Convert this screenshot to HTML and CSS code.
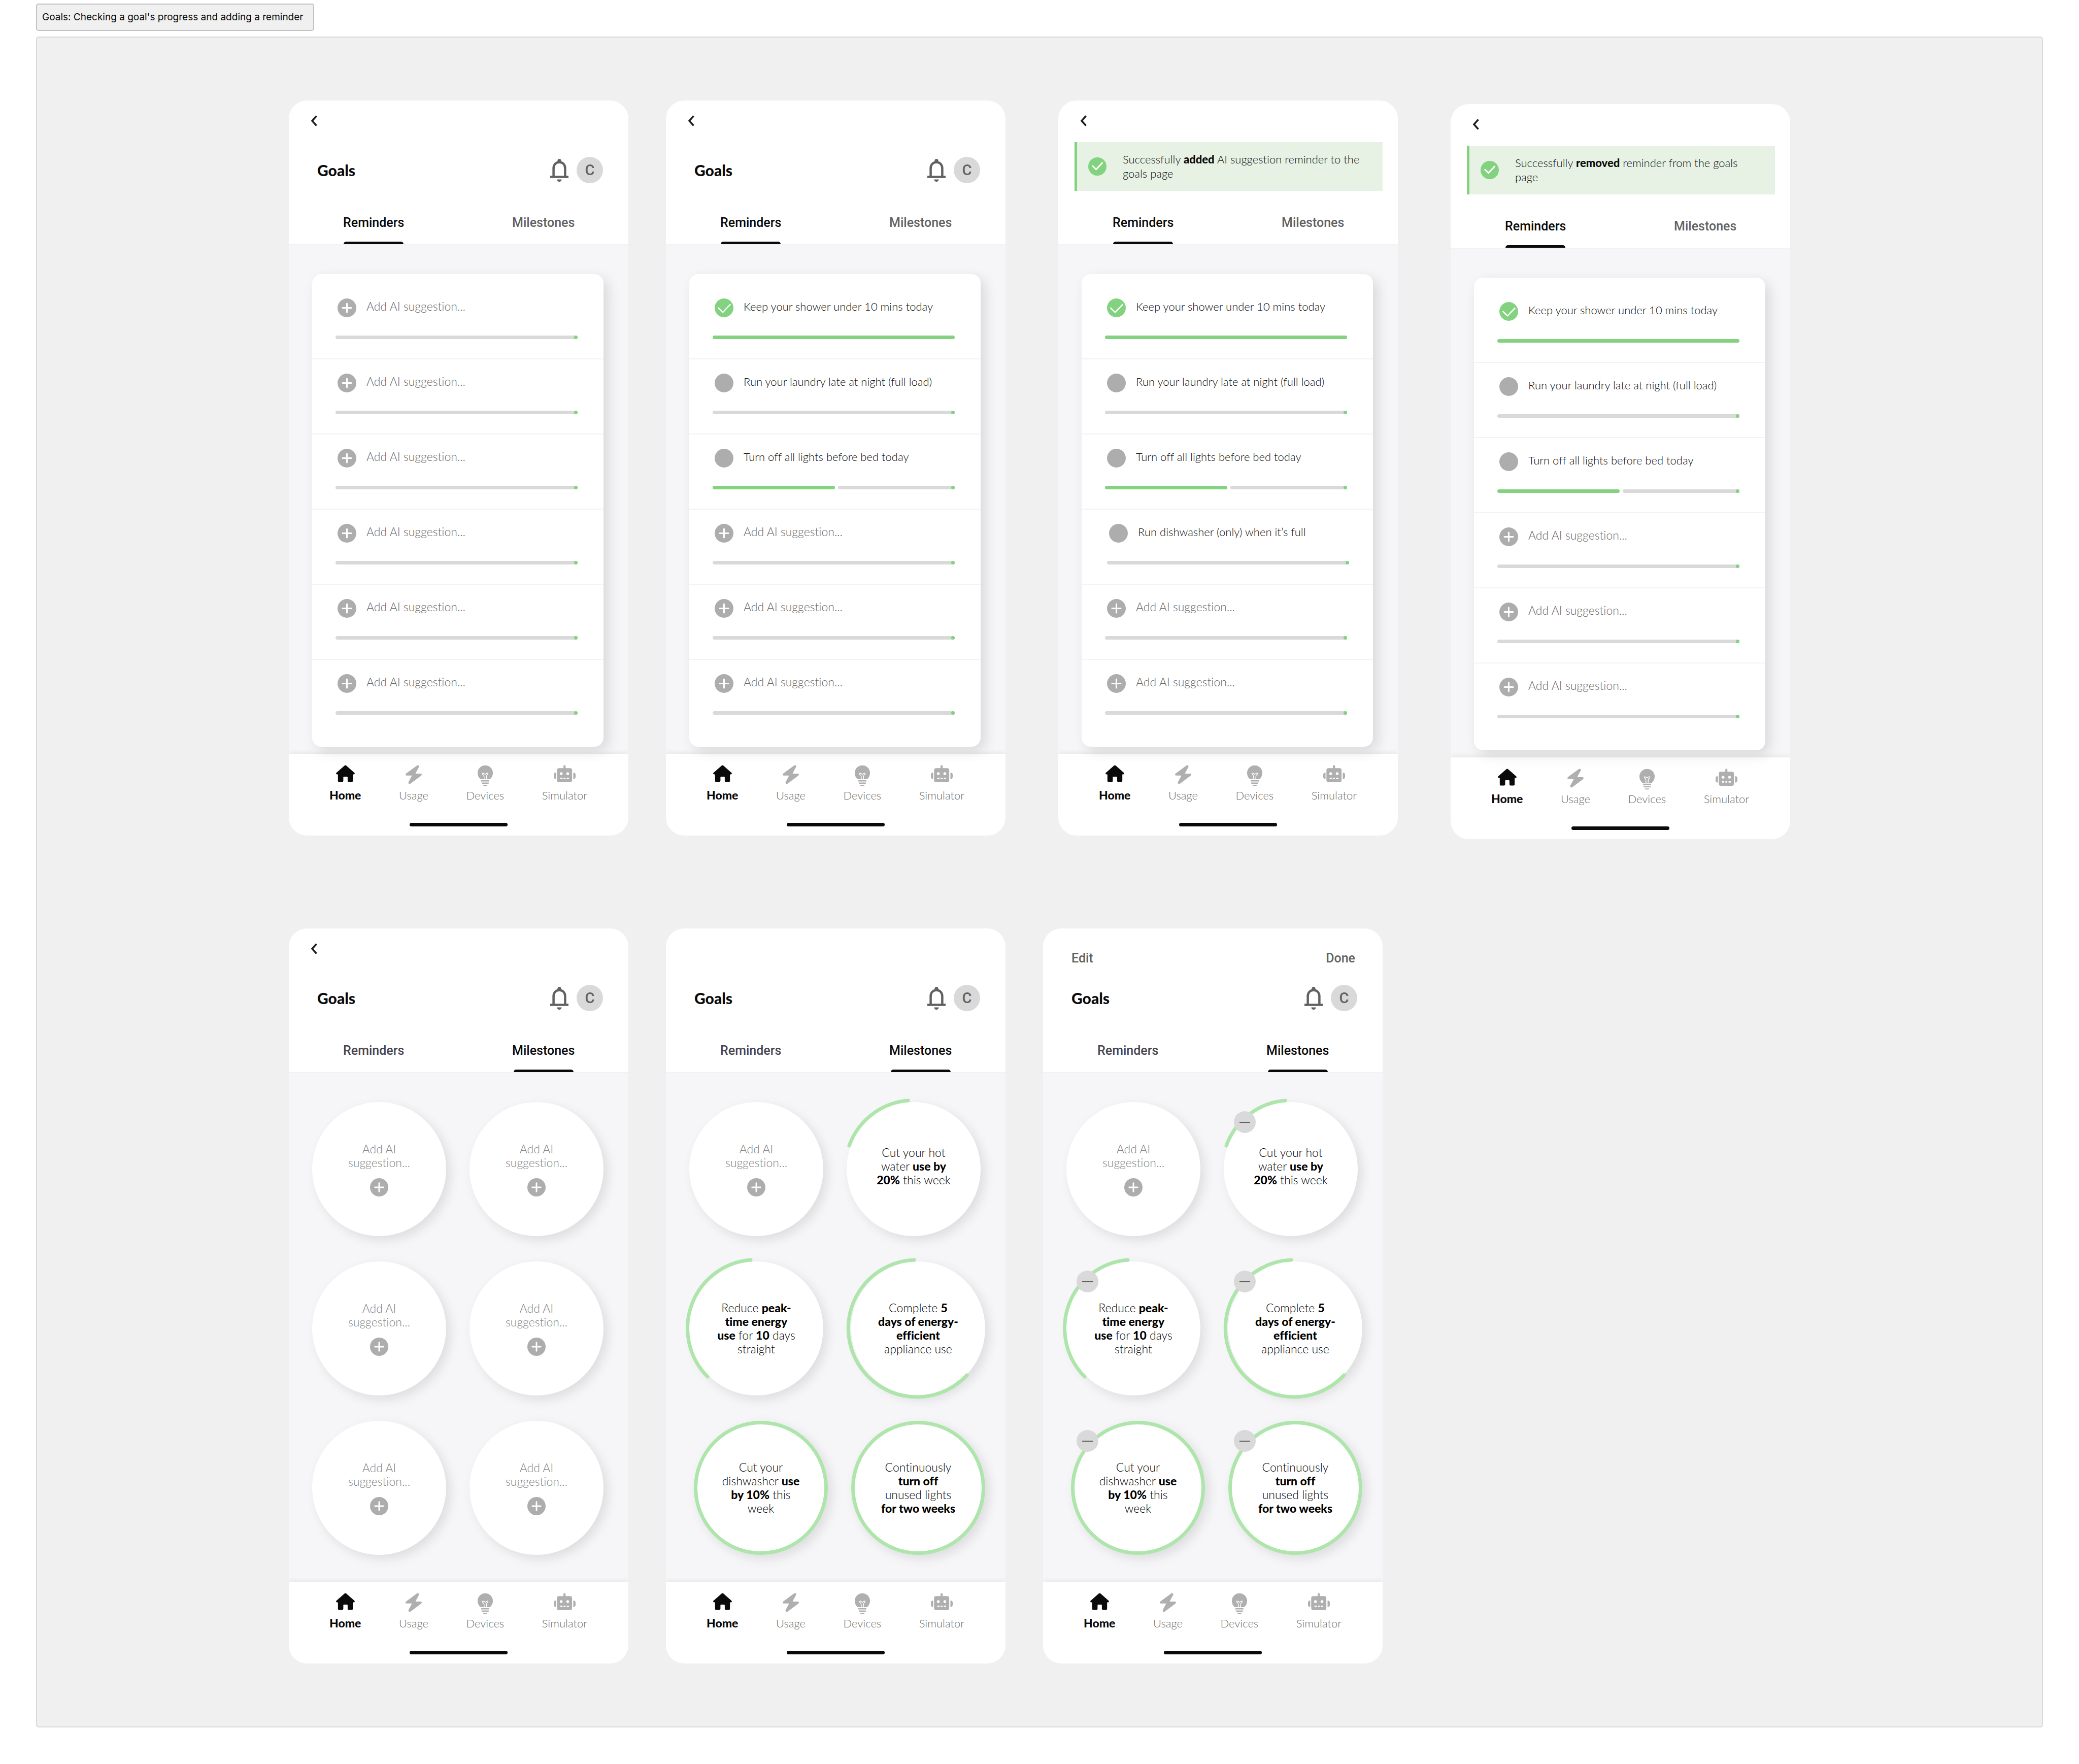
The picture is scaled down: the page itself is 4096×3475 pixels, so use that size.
FILE: index.html
```html
<!DOCTYPE html>
<html lang="en">
<head>
<meta charset="utf-8">
<meta name="viewport" content="width=device-width, initial-scale=1">
<title>Goals: Checking a goal's progress and adding a reminder</title>
<link rel="stylesheet" href="styles.css">
</head>
<body>
<svg class="sprite" aria-hidden="true">
  <symbol id="i-back" viewBox="0 0 13 22"><path d="M11.500 1.500 3 11l8.500 9.500" fill="none" stroke="#1d1b20" stroke-width="3.500"/></symbol>
  <symbol id="i-bell" viewBox="0 0 120 150"><circle cx="60" cy="12" r="12"/><path d="M22 116V62C22 37 38 22 60 22s38 15 38 40v54" fill="none" stroke="currentColor" stroke-width="15"/><path d="M0 111h120v15H0zM45 135h30a15 15 0 0 1-30 0z"/></symbol>
  <symbol id="i-plus" viewBox="0 0 37 37"><circle cx="18.5" cy="18.5" r="18.5" fill="#adadad"/><path d="M18.5 10v17M10 18.5h17" fill="none" stroke="#fff" stroke-width="3" stroke-linecap="round"/></symbol>
  <symbol id="i-check" viewBox="0 0 37 37"><circle cx="18.5" cy="18.5" r="18.5" fill="#82d27f"/><path d="m9 17.500 7 7 12.500-13.500" fill="none" stroke="#fff" stroke-width="3" stroke-linecap="round" stroke-linejoin="round"/></symbol>
  <symbol id="i-home" viewBox="0 0 126 113"><path d="M57 3Q63-2 69 3l55 48q5 9-5 11h-6v43q0 8-8 8H86q-8 0-8-8V82q0-5-5-5H53q-4 0-4 5v23q0 8-8 8H22q-9 0-9-8V62H7Q-3 60 2 51z"/></symbol>
  <symbol id="i-bolt" viewBox="0 0 108 126"><path d="M76 2 4 55q-8 9 1 14h34q3 0 2 3l-22 42q0 15 14 9l71-53q8-9-1-14H69q-3 0-2-3l23-43Q90-4 76 2z"/></symbol>
  <symbol id="i-bulb" viewBox="0 0 102 138"><path d="M19 93C6 81 0 67 0 51a51 51 0 0 1 102 0c0 16-6 30-19 42zM24 99h54v9H24zM26 115h50q0 8-4 8H30q-4 0-4-8zM35 131h32q-2 7-8 7H43q-6 0-8-7z"/><path d="m44 94-1-20q-1-9-8-12-6-7 1-10 5 0 15 8 10-8 15-8 7 3 1 10-7 3-8 12l-1 20" fill="none" stroke="#fff" stroke-width="5"/></symbol>
  <symbol id="i-robot" viewBox="0 0 144 114"><path d="M64 24V7q7-14 14 0v17z"/><path fill-rule="evenodd" d="M35 21h72q14 0 14 14v65q0 14-14 14H35q-14 0-14-14V35q0-14 14-14zm14 27a9.500 9.500 0 1 0 .1 0zm43 0a9.500 9.500 0 1 0 .1 0zM44 84q-4 4.500 0 9h12q4-4.500 0-9zm22 0q-4 4.500 0 9h10q4-4.500 0-9zm21 0q-4 4.500 0 9h12q4-4.500 0-9z"/><path d="M15 50v43C5 93 0 88 0 80V63c0-8 5-13 15-13zM129 50v43c10 0 15-5 15-13V63c0-8-5-13-15-13z"/></symbol>
  <symbol id="a-20" viewBox="0 0 264 264"><path d="M5 86A135 135 0 0 1 121-3"/></symbol>
  <symbol id="a-40" viewBox="0 0 264 264"><path d="M36 227A135 135 0 0 1 121-3"/></symbol>
  <symbol id="a-60" viewBox="0 0 264 264"><path d="M232 224A135 135 0 1 1 128-3"/></symbol>
</svg>

<main class="page">
<h1 class="page__label">Goals: Checking a goal's progress and adding a reminder</h1>
<section class="board">
<div class="flows">

<div class="flow">
  <article class="screen">
    <header class="header">
      <div class="topbar"><button class="icon-button" aria-label="Back"><svg class="back"><use href="#i-back"/></svg></button></div>
      <div class="titlebar"><h2 class="title">Goals</h2><button class="icon-button" aria-label="Notifications"><svg class="bell"><use href="#i-bell"/></svg></button><span class="avatar">C</span></div>
      <div class="tabs"><button class="tab tab--active">Reminders</button><button class="tab">Milestones</button></div>
    </header>
    <div class="content">
      <ul class="card">
        <li class="reminder"><button class="reminder__head"><svg class="dot"><use href="#i-plus"/></svg>Add AI suggestion...</button><div class="bar"><span class="bar__track"></span></div></li>
        <li class="reminder"><button class="reminder__head"><svg class="dot"><use href="#i-plus"/></svg>Add AI suggestion...</button><div class="bar"><span class="bar__track"></span></div></li>
        <li class="reminder"><button class="reminder__head"><svg class="dot"><use href="#i-plus"/></svg>Add AI suggestion...</button><div class="bar"><span class="bar__track"></span></div></li>
        <li class="reminder"><button class="reminder__head"><svg class="dot"><use href="#i-plus"/></svg>Add AI suggestion...</button><div class="bar"><span class="bar__track"></span></div></li>
        <li class="reminder"><button class="reminder__head"><svg class="dot"><use href="#i-plus"/></svg>Add AI suggestion...</button><div class="bar"><span class="bar__track"></span></div></li>
        <li class="reminder"><button class="reminder__head"><svg class="dot"><use href="#i-plus"/></svg>Add AI suggestion...</button><div class="bar"><span class="bar__track"></span></div></li>
      </ul>
    </div>
    <nav class="nav">
      <a class="nav__item nav__item--active" href="#"><svg class="nav__icon nav__icon--home"><use href="#i-home"/></svg>Home</a>
      <a class="nav__item" href="#"><svg class="nav__icon nav__icon--bolt"><use href="#i-bolt"/></svg>Usage</a>
      <a class="nav__item" href="#"><svg class="nav__icon nav__icon--bulb"><use href="#i-bulb"/></svg>Devices</a>
      <a class="nav__item" href="#"><svg class="nav__icon nav__icon--robot"><use href="#i-robot"/></svg>Simulator</a>
    </nav>
  </article>

  <article class="screen">
    <header class="header">
      <div class="topbar"><button class="icon-button" aria-label="Back"><svg class="back"><use href="#i-back"/></svg></button></div>
      <div class="titlebar"><h2 class="title">Goals</h2><button class="icon-button" aria-label="Notifications"><svg class="bell"><use href="#i-bell"/></svg></button><span class="avatar">C</span></div>
      <div class="tabs"><button class="tab tab--active">Reminders</button><button class="tab">Milestones</button></div>
    </header>
    <div class="content">
      <ul class="card">
        <li class="reminder"><label class="reminder__head reminder__head--set"><input class="dot tick" type="checkbox" checked>Keep your shower under 10 mins today</label><div class="bar"><span class="bar__fill"></span></div></li>
        <li class="reminder"><label class="reminder__head reminder__head--set"><input class="dot tick" type="checkbox">Run your laundry late at night (full load)</label><div class="bar"><span class="bar__track"></span></div></li>
        <li class="reminder"><label class="reminder__head reminder__head--set"><input class="dot tick" type="checkbox">Turn off all lights before bed today</label><div class="bar"><span class="bar__fill" style="width: 50.500%"></span><span class="bar__track"></span></div></li>
        <li class="reminder"><button class="reminder__head"><svg class="dot"><use href="#i-plus"/></svg>Add AI suggestion...</button><div class="bar"><span class="bar__track"></span></div></li>
        <li class="reminder"><button class="reminder__head"><svg class="dot"><use href="#i-plus"/></svg>Add AI suggestion...</button><div class="bar"><span class="bar__track"></span></div></li>
        <li class="reminder"><button class="reminder__head"><svg class="dot"><use href="#i-plus"/></svg>Add AI suggestion...</button><div class="bar"><span class="bar__track"></span></div></li>
      </ul>
    </div>
    <nav class="nav">
      <a class="nav__item nav__item--active" href="#"><svg class="nav__icon nav__icon--home"><use href="#i-home"/></svg>Home</a>
      <a class="nav__item" href="#"><svg class="nav__icon nav__icon--bolt"><use href="#i-bolt"/></svg>Usage</a>
      <a class="nav__item" href="#"><svg class="nav__icon nav__icon--bulb"><use href="#i-bulb"/></svg>Devices</a>
      <a class="nav__item" href="#"><svg class="nav__icon nav__icon--robot"><use href="#i-robot"/></svg>Simulator</a>
    </nav>
  </article>

  <article class="screen screen--apart">
    <header class="header">
      <div class="topbar"><button class="icon-button" aria-label="Back"><svg class="back"><use href="#i-back"/></svg></button></div>
      <div class="alert" role="status"><svg class="alert__icon"><use href="#i-check"/></svg><p class="alert__text">Successfully <b>added</b> AI suggestion reminder to the<br>goals page</p></div>
      <div class="tabs"><button class="tab tab--active">Reminders</button><button class="tab">Milestones</button></div>
    </header>
    <div class="content">
      <ul class="card">
        <li class="reminder"><label class="reminder__head reminder__head--set"><input class="dot tick" type="checkbox" checked>Keep your shower under 10 mins today</label><div class="bar"><span class="bar__fill"></span></div></li>
        <li class="reminder"><label class="reminder__head reminder__head--set"><input class="dot tick" type="checkbox">Run your laundry late at night (full load)</label><div class="bar"><span class="bar__track"></span></div></li>
        <li class="reminder"><label class="reminder__head reminder__head--set"><input class="dot tick" type="checkbox">Turn off all lights before bed today</label><div class="bar"><span class="bar__fill" style="width: 50.500%"></span><span class="bar__track"></span></div></li>
        <li class="reminder reminder--new"><label class="reminder__head reminder__head--set"><input class="dot tick" type="checkbox">Run dishwasher (only) when it’s full</label><div class="bar"><span class="bar__track"></span></div></li>
        <li class="reminder"><button class="reminder__head"><svg class="dot"><use href="#i-plus"/></svg>Add AI suggestion...</button><div class="bar"><span class="bar__track"></span></div></li>
        <li class="reminder"><button class="reminder__head"><svg class="dot"><use href="#i-plus"/></svg>Add AI suggestion...</button><div class="bar"><span class="bar__track"></span></div></li>
      </ul>
    </div>
    <nav class="nav">
      <a class="nav__item nav__item--active" href="#"><svg class="nav__icon nav__icon--home"><use href="#i-home"/></svg>Home</a>
      <a class="nav__item" href="#"><svg class="nav__icon nav__icon--bolt"><use href="#i-bolt"/></svg>Usage</a>
      <a class="nav__item" href="#"><svg class="nav__icon nav__icon--bulb"><use href="#i-bulb"/></svg>Devices</a>
      <a class="nav__item" href="#"><svg class="nav__icon nav__icon--robot"><use href="#i-robot"/></svg>Simulator</a>
    </nav>
  </article>

  <article class="screen screen--apart screen--lower">
    <header class="header">
      <div class="topbar"><button class="icon-button" aria-label="Back"><svg class="back"><use href="#i-back"/></svg></button></div>
      <div class="alert" role="status"><svg class="alert__icon"><use href="#i-check"/></svg><p class="alert__text">Successfully <b>removed</b> reminder from the goals<br>page</p></div>
      <div class="tabs"><button class="tab tab--active">Reminders</button><button class="tab">Milestones</button></div>
    </header>
    <div class="content">
      <ul class="card">
        <li class="reminder"><label class="reminder__head reminder__head--set"><input class="dot tick" type="checkbox" checked>Keep your shower under 10 mins today</label><div class="bar"><span class="bar__fill"></span></div></li>
        <li class="reminder"><label class="reminder__head reminder__head--set"><input class="dot tick" type="checkbox">Run your laundry late at night (full load)</label><div class="bar"><span class="bar__track"></span></div></li>
        <li class="reminder"><label class="reminder__head reminder__head--set"><input class="dot tick" type="checkbox">Turn off all lights before bed today</label><div class="bar"><span class="bar__fill" style="width: 50.500%"></span><span class="bar__track"></span></div></li>
        <li class="reminder"><button class="reminder__head"><svg class="dot"><use href="#i-plus"/></svg>Add AI suggestion...</button><div class="bar"><span class="bar__track"></span></div></li>
        <li class="reminder"><button class="reminder__head"><svg class="dot"><use href="#i-plus"/></svg>Add AI suggestion...</button><div class="bar"><span class="bar__track"></span></div></li>
        <li class="reminder"><button class="reminder__head"><svg class="dot"><use href="#i-plus"/></svg>Add AI suggestion...</button><div class="bar"><span class="bar__track"></span></div></li>
      </ul>
    </div>
    <nav class="nav">
      <a class="nav__item nav__item--active" href="#"><svg class="nav__icon nav__icon--home"><use href="#i-home"/></svg>Home</a>
      <a class="nav__item" href="#"><svg class="nav__icon nav__icon--bolt"><use href="#i-bolt"/></svg>Usage</a>
      <a class="nav__item" href="#"><svg class="nav__icon nav__icon--bulb"><use href="#i-bulb"/></svg>Devices</a>
      <a class="nav__item" href="#"><svg class="nav__icon nav__icon--robot"><use href="#i-robot"/></svg>Simulator</a>
    </nav>
  </article>
</div>

<div class="flow">
  <article class="screen">
    <header class="header">
      <div class="topbar"><button class="icon-button" aria-label="Back"><svg class="back"><use href="#i-back"/></svg></button></div>
      <div class="titlebar"><h2 class="title">Goals</h2><button class="icon-button" aria-label="Notifications"><svg class="bell"><use href="#i-bell"/></svg></button><span class="avatar">C</span></div>
      <div class="tabs"><button class="tab tab--slate">Reminders</button><button class="tab tab--active">Milestones</button></div>
    </header>
    <div class="content">
      <ul class="milestones">
        <li class="cell"><button class="milestone milestone--add">Add AI<br>suggestion...<svg class="milestone__plus"><use href="#i-plus"/></svg></button></li>
        <li class="cell"><button class="milestone milestone--add">Add AI<br>suggestion...<svg class="milestone__plus"><use href="#i-plus"/></svg></button></li>
        <li class="cell"><button class="milestone milestone--add">Add AI<br>suggestion...<svg class="milestone__plus"><use href="#i-plus"/></svg></button></li>
        <li class="cell"><button class="milestone milestone--add">Add AI<br>suggestion...<svg class="milestone__plus"><use href="#i-plus"/></svg></button></li>
        <li class="cell"><button class="milestone milestone--add">Add AI<br>suggestion...<svg class="milestone__plus"><use href="#i-plus"/></svg></button></li>
        <li class="cell"><button class="milestone milestone--add">Add AI<br>suggestion...<svg class="milestone__plus"><use href="#i-plus"/></svg></button></li>
      </ul>
    </div>
    <nav class="nav">
      <a class="nav__item nav__item--active" href="#"><svg class="nav__icon nav__icon--home"><use href="#i-home"/></svg>Home</a>
      <a class="nav__item" href="#"><svg class="nav__icon nav__icon--bolt"><use href="#i-bolt"/></svg>Usage</a>
      <a class="nav__item" href="#"><svg class="nav__icon nav__icon--bulb"><use href="#i-bulb"/></svg>Devices</a>
      <a class="nav__item" href="#"><svg class="nav__icon nav__icon--robot"><use href="#i-robot"/></svg>Simulator</a>
    </nav>
  </article>

  <article class="screen">
    <header class="header">
      <div class="topbar"></div>
      <div class="titlebar"><h2 class="title">Goals</h2><button class="icon-button" aria-label="Notifications"><svg class="bell"><use href="#i-bell"/></svg></button><span class="avatar">C</span></div>
      <div class="tabs"><button class="tab tab--slate">Reminders</button><button class="tab tab--active">Milestones</button></div>
    </header>
    <div class="content">
      <ul class="milestones">
        <li class="cell"><button class="milestone milestone--add">Add AI<br>suggestion...<svg class="milestone__plus"><use href="#i-plus"/></svg></button></li>
        <li class="cell"><div class="milestone milestone--short"><p>Cut your hot<br>water <b>use by<br>20%</b> this week</p><svg class="arc"><use href="#a-20"/></svg></div></li>
        <li class="cell"><div class="milestone"><p>Reduce <b>peak-<br>time energy<br>use</b> for <b>10</b> days<br>straight</p><svg class="arc"><use href="#a-40"/></svg></div></li>
        <li class="cell cell--ahead"><div class="milestone"><p>Complete <b>5<br>days of energy-<br>efficient</b><br>appliance use</p><svg class="arc arc--wide"><use href="#a-60"/></svg></div></li>
        <li class="cell cell--ahead"><div class="milestone milestone--done"><p>Cut your<br>dishwasher <b>use<br>by 10%</b> this<br>week</p></div></li>
        <li class="cell cell--ahead"><div class="milestone milestone--done"><p>Continuously<br><b>turn off</b><br>unused lights<br><b>for two weeks</b></p></div></li>
      </ul>
    </div>
    <nav class="nav">
      <a class="nav__item nav__item--active" href="#"><svg class="nav__icon nav__icon--home"><use href="#i-home"/></svg>Home</a>
      <a class="nav__item" href="#"><svg class="nav__icon nav__icon--bolt"><use href="#i-bolt"/></svg>Usage</a>
      <a class="nav__item" href="#"><svg class="nav__icon nav__icon--bulb"><use href="#i-bulb"/></svg>Devices</a>
      <a class="nav__item" href="#"><svg class="nav__icon nav__icon--robot"><use href="#i-robot"/></svg>Simulator</a>
    </nav>
  </article>

  <article class="screen">
    <header class="header">
      <div class="topbar topbar--edit"><button class="text-button">Edit</button><button class="text-button">Done</button></div>
      <div class="titlebar"><h2 class="title">Goals</h2><button class="icon-button" aria-label="Notifications"><svg class="bell"><use href="#i-bell"/></svg></button><span class="avatar">C</span></div>
      <div class="tabs"><button class="tab tab--slate">Reminders</button><button class="tab tab--active">Milestones</button></div>
    </header>
    <div class="content">
      <ul class="milestones">
        <li class="cell"><button class="milestone milestone--add">Add AI<br>suggestion...<svg class="milestone__plus"><use href="#i-plus"/></svg></button></li>
        <li class="cell"><div class="milestone milestone--short"><p>Cut your hot<br>water <b>use by<br>20%</b> this week</p><svg class="arc"><use href="#a-20"/></svg></div><button class="remove" aria-label="Remove milestone"></button></li>
        <li class="cell"><div class="milestone"><p>Reduce <b>peak-<br>time energy<br>use</b> for <b>10</b> days<br>straight</p><svg class="arc"><use href="#a-40"/></svg></div><button class="remove" aria-label="Remove milestone"></button></li>
        <li class="cell cell--ahead"><div class="milestone"><p>Complete <b>5<br>days of energy-<br>efficient</b><br>appliance use</p><svg class="arc arc--wide"><use href="#a-60"/></svg></div><button class="remove" aria-label="Remove milestone"></button></li>
        <li class="cell cell--ahead"><div class="milestone milestone--done"><p>Cut your<br>dishwasher <b>use<br>by 10%</b> this<br>week</p></div><button class="remove" aria-label="Remove milestone"></button></li>
        <li class="cell cell--ahead"><div class="milestone milestone--done"><p>Continuously<br><b>turn off</b><br>unused lights<br><b>for two weeks</b></p></div><button class="remove" aria-label="Remove milestone"></button></li>
      </ul>
    </div>
    <nav class="nav">
      <a class="nav__item nav__item--active" href="#"><svg class="nav__icon nav__icon--home"><use href="#i-home"/></svg>Home</a>
      <a class="nav__item" href="#"><svg class="nav__icon nav__icon--bolt"><use href="#i-bolt"/></svg>Usage</a>
      <a class="nav__item" href="#"><svg class="nav__icon nav__icon--bulb"><use href="#i-bulb"/></svg>Devices</a>
      <a class="nav__item" href="#"><svg class="nav__icon nav__icon--robot"><use href="#i-robot"/></svg>Simulator</a>
    </nav>
  </article>
</div>

</div>
</section>
</main>
</body>
</html>
```
FILE: styles.css
```css
* { box-sizing: border-box; }

body, h1, h2, p, ul { margin: 0; padding: 0; }

body {
  background: #fff;
  color: #0a0a0a;
  font: 300 22px/27px Lato, "Open Sans", sans-serif;
  font-variant-ligatures: none;
}

ul { list-style: none; }

button {
  margin: 0;
  padding: 0;
  border: 0;
  background: none;
  color: inherit;
  font: inherit;
  font-variant-ligatures: inherit;
  cursor: pointer;
}

b { font-weight: 900; }

svg { display: block; flex: none; fill: currentColor; overflow: visible; }

symbol { overflow: visible; }

.sprite { position: absolute; width: 0; height: 0; }

/* Artboard */
.page { padding: 7px 71px 72px; }

.page__label {
  width: fit-content;
  margin-bottom: 11px;
  padding: 0 20px 0 10px;
  border: 2px solid #c2c2c2;
  border-radius: 5px;
  background: #f0f0f0;
  font: 400 19px/50px Inter, sans-serif;
}

.board {
  padding: 124px 0;
  border: 2px solid #d9d9d9;
  border-radius: 5px;
  background: #f0f0f0;
}

.flows { width: fit-content; max-width: 100%; margin: 0 auto; }

.flow { display: flex; align-items: flex-start; gap: 74px; }

.flow + .flow { margin-top: 176px; }

/* Phone screen */
.screen {
  display: flex;
  flex: 0 1 669px;
  flex-direction: column;
  width: 669px;
  min-height: 1448px;
  border-radius: 36px;
  background: #f6f6f9;
  overflow: hidden;
}

.screen--apart { margin-left: 30px; }

.screen--lower { margin-top: 7px; }

.header { background: #fff; }

.topbar {
  display: flex;
  align-items: center;
  height: 82px;
  padding: 0 54px 3px 43px;
}

.topbar--edit { justify-content: space-between; padding: 36px 54px 0 56px; }

.back { width: 13px; height: 22px; }

.text-button { color: #616161; font: 500 25px/46px Roboto, sans-serif; }

.titlebar {
  display: flex;
  align-items: center;
  height: 110px;
  margin-bottom: 7px;
  padding: 0 50px 0 56px;
}

.title { flex: 1; font-size: 30px; font-weight: 900; line-height: 36px; }

.bell { width: 36px; height: 45px; color: #616161; }

.avatar {
  width: 52px;
  margin-left: 16px;
  border-radius: 50%;
  background: #d9d9d9;
  color: #616161;
  font: 500 29px/52px Roboto, sans-serif;
  text-align: center;
}

.tabs { display: grid; grid-template-columns: 1fr 1fr; }

.tab {
  display: grid;
  justify-items: center;
  padding-top: 5px;
  color: #616161;
  font: 500 25px/74px Roboto, sans-serif;
}

.tab::after { content: ""; width: 118px; height: 5px; }

.tab--slate { color: #49454f; }

.tab--active { color: #0a0a0a; }

.tab--active::after { border-radius: 5px 5px 0 0; background: #0a0a0a; }

.alert {
  display: flex;
  align-items: center;
  gap: 32px;
  min-height: 96px;
  margin: 0 30px 21px 32px;
  padding: 0 19px 0 22px;
  border-left: 5px solid #82d27f;
  background: #e7f2e5;
}

.alert__icon { width: 36px; height: 36px; }

.alert__text { flex: 1; line-height: 28px; }

.content {
  position: relative;
  z-index: 1;
  flex: 1;
  border-top: 2px solid #f2f2f4;
}

/* Reminders */
.card {
  margin: 57px 49px 14px 46px;
  padding: 20px 0 23px;
  border-radius: 18px;
  background: #fff;
  box-shadow: 9px 9px 27px rgba(0, 0, 0, .12);
}

.reminder { height: 148px; padding: 28px 51px 0 46px; border-bottom: 2px solid #f3f3f3; }

.reminder:last-child { border-bottom: 0; }

.reminder--new { padding-right: 47px; padding-left: 50px; }

.reminder__head {
  display: flex;
  gap: 20px;
  padding-left: 4px;
  color: #666;
  font-size: 23px;
  line-height: 31px;
}

.reminder__head--set { color: #0a0a0a; font-size: 22px; }

.dot { width: 37px; height: 37px; }

.tick {
  display: grid;
  flex: none;
  place-items: center;
  margin: 0;
  border-radius: 50%;
  background: #adadad;
  appearance: none;
}

.tick:checked { background: #82d27f; }

.tick:checked::after {
  content: "";
  width: 21px;
  height: 12px;
  margin-bottom: 6px;
  border: solid #fff;
  border-width: 0 0 3px 3px;
  border-radius: 2px;
  transform: rotate(-46deg);
}

.bar { display: flex; gap: 6px; margin-top: 36px; }

.bar__fill { width: 100%; height: 7px; border-radius: 4px; background: #82d27f; }

.bar__track {
  display: flex;
  flex: 1;
  justify-content: flex-end;
  height: 7px;
  border-radius: 4px;
  background: #d9d9d9;
}

.bar__track::after { content: ""; width: 7px; height: 7px; border-radius: 50%; background: #82d27f; }

/* Milestones */
.milestones {
  display: grid;
  grid-template-columns: 264px 264px;
  gap: 50px 46px;
  padding: 57px 0 53px 46px;
}

.cell { position: relative; }

.milestone {
  position: relative;
  display: grid;
  place-content: center;
  width: 264px;
  height: 264px;
  border-radius: 50%;
  background: #fff;
  box-shadow: 8px 8px 22px rgba(0, 0, 0, .1);
  color: #000;
  font-size: 23px;
  text-align: center;
}

.cell--ahead .milestone { margin-left: 9px; }

.milestone--short { padding-bottom: 12px; }

.milestone--add {
  display: block;
  color: #808080;
}

.milestone__plus { width: 36px; height: 36px; margin: 17px auto 0; }

.milestone--done { border: 7px solid #aee5ab; }

.arc {
  position: absolute;
  inset: 0;
  width: 264px;
  height: 264px;
  color: #aee5ab;
  fill: none;
  stroke: #aee5ab;
  stroke-width: 7px;
  stroke-linecap: round;
}

.arc--wide { left: -4px; }

.remove {
  position: absolute;
  top: 18px;
  left: 20px;
  display: grid;
  place-content: center;
  width: 43px;
  height: 43px;
  border-radius: 50%;
  background: #d9d9d9;
}

.remove::after { content: ""; width: 21px; height: 2px; background: #616161; }

/* Bottom navigation */
.nav {
  display: grid;
  grid-template-columns: repeat(4, auto);
  justify-content: space-between;
  padding: 22px 81px 18px 80px;
  background: #fff;
  box-shadow: 0 -2px 10px rgba(0, 0, 0, .07);
}

.nav::after {
  content: "";
  grid-column: 1 / -1;
  justify-self: center;
  width: 193px;
  height: 7px;
  margin-top: 41px;
  border-radius: 4px;
  background: #0a0a0a;
}

.nav__item {
  display: grid;
  grid-template-rows: 46px 27px;
  justify-items: center;
  color: #6b6b6b;
  text-decoration: none;
}

.nav__item--active { color: #0a0a0a; font-size: 23px; font-weight: 900; }

.nav__icon { color: #afafaf; }

.nav__icon--home { width: 37px; height: 34px; color: #0a0a0a; }

.nav__icon--bolt { width: 32px; height: 38px; }

.nav__icon--bulb { width: 30px; height: 42px; }

.nav__icon--robot { width: 43px; height: 34px; }
```
